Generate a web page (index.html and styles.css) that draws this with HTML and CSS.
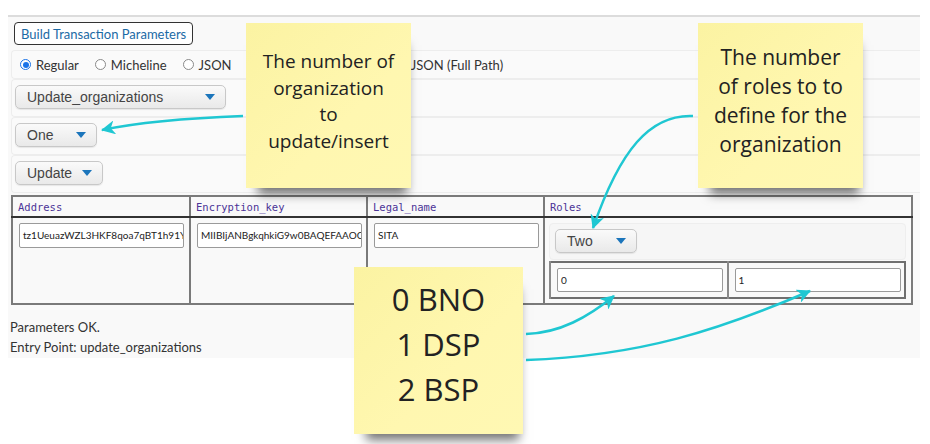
FILE: index.html
```html
<!DOCTYPE html>
<html>
<head>
<meta charset="utf-8">
<link rel="stylesheet" href="styles.css">
</head>
<body>
<div class="stage">
  <div class="panel">
    <button class="build-btn">Build Transaction Parameters</button>
    <div class="row opt-row">
      <label class="opt"><span class="radio checked"></span>Regular</label>
      <label class="opt"><span class="radio"></span>Micheline</label>
      <label class="opt"><span class="radio"></span>JSON</label>
      <label class="opt"><span class="radio"></span>Micheline (Full Path)</label>
      <label class="opt"><span class="radio"></span>JSON (Full Path)</label>
    </div>
    <div class="row sel-row">
      <div class="select w-entry"><span>Update_organizations</span><i class="caret"></i></div>
    </div>
    <div class="row sel-row">
      <div class="select w-one"><span>One</span><i class="caret"></i></div>
    </div>
    <div class="row sel-row">
      <div class="select w-update"><span>Update</span><i class="caret"></i></div>
    </div>
    <table class="params">
      <colgroup><col class="c1"><col class="c2"><col class="c3"><col class="c4"></colgroup>
      <thead>
        <tr><th>Address</th><th>Encryption_key</th><th>Legal_name</th><th>Roles</th></tr>
      </thead>
      <tbody>
        <tr>
          <td><div class="field">tz1UeuazWZL3HKF8qoa7qBT1h91YDnBXKmcN</div></td>
          <td><div class="field">MIIBIjANBgkqhkiG9w0BAQEFAAOCAQ8AMIIBCgKCAQEA</div></td>
          <td><div class="field">SITA</div></td>
          <td class="roles">
            <div class="sub-panel">
              <div class="select w-two"><span>Two</span><i class="caret"></i></div>
            </div>
            <table class="inner">
              <tr><td><div class="field wide">0</div></td><td><div class="field wide">1</div></td></tr>
            </table>
          </td>
        </tr>
      </tbody>
    </table>
    <div class="status">
      <div>Parameters OK.</div>
      <div>Entry Point: update_organizations</div>
    </div>
  </div>

  <svg class="arrows" width="930" height="444" viewBox="0 0 930 444">
    <defs>
      <marker id="ah" markerUnits="userSpaceOnUse" markerWidth="16" markerHeight="14" refX="13" refY="7" orient="auto">
        <path class="head" d="M0,0 L14,7 L0,14 L4,7 Z"/>
      </marker>
    </defs>
    <path class="line" d="M243,116 C190,118 140,122 102,130" marker-end="url(#ah)"/>
    <path class="line" d="M693,116 C650,114 620,150 593,228" marker-end="url(#ah)"/>
    <path class="line" d="M526,334 C560,333 588,317 614,296" marker-end="url(#ah)"/>
    <path class="line" d="M526,360 C640,356 720,330 810,291" marker-end="url(#ah)"/>
  </svg>

  <div class="note note1">The number of<br>organization<br>to<br>update/insert</div>
  <div class="note note2">The number<br>of roles to to<br>define for the<br>organization</div>
  <div class="note note3">0 BNO<br>1 DSP<br>2 BSP</div>
</div>
</body>
</html>
```

FILE: styles.css
```css
* { box-sizing: border-box; }
html, body { margin: 0; padding: 0; background: #fff; }
body { font-family: Lato, "Liberation Sans", sans-serif; color: #333; }

.stage { position: relative; width: 930px; height: 444px; overflow: hidden; }

.panel {
  margin: 15px 0 0 8px;
  width: 912px;
  height: 343px;
  border-top: 2px solid #dcdcdc;
  background: #f9f9f9;
  padding: 5px 0 0 3px;
}

.build-btn {
  display: block;
  margin-left: 3px;
  height: 23px;
  padding: 0 6px;
  border: 1.5px solid #333;
  border-radius: 4px;
  background: #fff;
  color: #1b6aa5;
  font-family: Lato, sans-serif;
  font-size: 13px;
}

.row {
  border: 1px solid #ededed;
  border-right: none;
  border-radius: 4px 0 0 4px;
  background: #fafafa;
}
.opt-row {
  margin-top: 5px;
  height: 29px;
  display: flex;
  align-items: center;
  padding-left: 8px;
  font-size: 13px;
  color: #333;
}
.opt { display: flex; align-items: center; margin-right: 16px; }
.radio {
  width: 11px; height: 11px;
  border: 1px solid #8a8a8a;
  border-radius: 50%;
  background: #fff;
  margin-right: 5px;
  position: relative;
}
.radio.checked { border-color: #1a73e8; }
.radio.checked::after {
  content: "";
  position: absolute; left: 1.5px; top: 1.5px;
  width: 6px; height: 6px; border-radius: 50%;
  background: #1a73e8;
}

.sel-row {
  height: 38px;
  padding: 5px 0 0 3px;
}
.select {
  height: 24px;
  border: 1px solid #c8c8c8;
  border-radius: 5px;
  background: linear-gradient(#fafafa, #e9e9e9);
  box-shadow: 0 1px 1px rgba(0,0,0,0.08);
  display: flex;
  align-items: center;
  justify-content: space-between;
  padding: 0 10px 0 11px;
  font-family: "Liberation Sans", Arial, sans-serif;
  font-size: 14px;
  color: #444;
}
.caret {
  width: 0; height: 0;
  border-left: 5px solid transparent;
  border-right: 5px solid transparent;
  border-top: 6px solid #1b75bb;
}
.w-entry { width: 211px; }
.w-one { width: 82px; }
.w-update { width: 88px; }
.w-two { width: 82px; }

.params {
  margin-top: 2px;
  width: 900px;
  table-layout: fixed;
  border-collapse: collapse;
  border: 2px solid #7a7a7a;
}
.c1 { width: 178px; } .c2 { width: 177px; } .c3 { width: 177px; } .c4 { width: 368px; }
.params th {
  height: 21px;
  text-align: left;
  padding: 0 5px;
  font-family: "DejaVu Sans Mono", monospace;
  font-weight: normal;
  font-size: 10.5px;
  color: #4b3497;
  border-left: 2px solid #7a7a7a;
  border-bottom: 2px solid #333;
}
.params > tbody > tr > td {
  vertical-align: top;
  height: 87px;
  padding: 5px 5px 0 6px;
  border-left: 2px solid #7a7a7a;
}
.field {
  width: 165px;
  height: 25px;
  border: 1px solid #9a9a9a;
  border-radius: 2px;
  background: #fff;
  font-family: Lato, sans-serif;
  font-size: 10px;
  line-height: 23px;
  padding: 0 3px;
  white-space: nowrap;
  overflow: hidden;
  color: #222;
}
.params > tbody > tr > td.roles { padding: 5px 5px 0 4px; }
.sub-panel {
  height: 37px;
  border: 1px solid #eeeeee;
  border-radius: 4px;
  background: #f6f6f6;
  padding: 5px 0 0 5px;
}
.inner {
  margin-top: 1px;
  width: 357px;
  border-collapse: collapse;
  border: 2px solid #6f6f6f;
  table-layout: fixed;
}
.inner td {
  height: 36px;
  padding: 5px 5px 0 6px;
  vertical-align: top;
  border-left: 2px solid #8a8a8a;
}
.field.wide { width: 166px; height: 24px; line-height: 22px; }

.status {
  margin-top: 12px;
  font-size: 13px;
  line-height: 20px;
  color: #333;
  margin-left: -1px;
}

.arrows {
  position: absolute; left: 0; top: 0;
  pointer-events: none;
}
.arrows .line { fill: none; stroke: #1fc7d2; stroke-width: 2.5; }
.arrows .head { fill: #1fc7d2; stroke: none; }

.note {
  position: absolute;
  background: linear-gradient(135deg, #fbf3a2 0%, #fff7b0 60%, #fff8b3 100%);
  color: #222;
  font-family: "Open Sans", "Noto Sans", sans-serif;
  text-align: center;
  box-shadow: 4px 14px 10px -8px rgba(0,0,0,0.55);
}
.note1 {
  left: 246px; top: 23px; width: 165px; height: 165px;
  font-size: 19px; line-height: 26.7px;
  padding-top: 25px;
}
.note2 {
  left: 698px; top: 23px; width: 165px; height: 165px;
  font-size: 21px; line-height: 29px;
  padding-top: 20px;
}
.note3 {
  left: 354px; top: 267px; width: 169px; height: 167px;
  font-size: 31px; line-height: 45px;
  padding-top: 10px;
}
```
